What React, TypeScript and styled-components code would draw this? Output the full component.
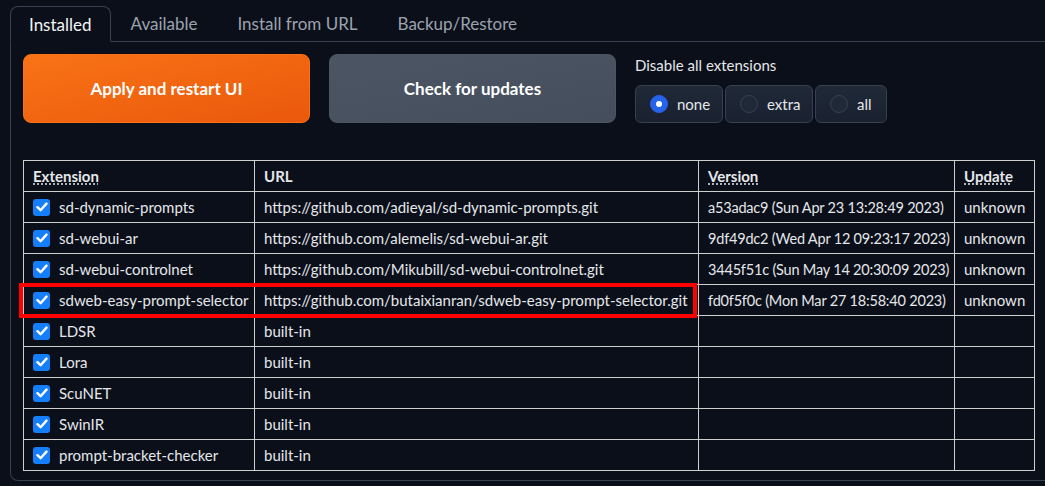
import React from 'react';
import styled, { createGlobalStyle } from 'styled-components';

const GlobalStyle = createGlobalStyle`
  html, body {
    margin: 0;
    padding: 0;
    background: #0b0f19;
  }
  body {
    font-family: Lato, "Noto Sans", sans-serif;
    color: #e5e7eb;
    overflow: hidden;
  }
`;

type Ext = {
  name: string;
  url: string;
  version: string;
  update: string;
};

const extensions: Ext[] = [
  { name: 'sd-dynamic-prompts', url: 'https://github.com/adieyal/sd-dynamic-prompts.git', version: 'a53adac9 (Sun Apr 23 13:28:49 2023)', update: 'unknown' },
  { name: 'sd-webui-ar', url: 'https://github.com/alemelis/sd-webui-ar.git', version: '9df49dc2 (Wed Apr 12 09:23:17 2023)', update: 'unknown' },
  { name: 'sd-webui-controlnet', url: 'https://github.com/Mikubill/sd-webui-controlnet.git', version: '3445f51c (Sun May 14 20:30:09 2023)', update: 'unknown' },
  { name: 'sdweb-easy-prompt-selector', url: 'https://github.com/butaixianran/sdweb-easy-prompt-selector.git', version: 'fd0f5f0c (Mon Mar 27 18:58:40 2023)', update: 'unknown' },
  { name: 'LDSR', url: 'built-in', version: '', update: '' },
  { name: 'Lora', url: 'built-in', version: '', update: '' },
  { name: 'ScuNET', url: 'built-in', version: '', update: '' },
  { name: 'SwinIR', url: 'built-in', version: '', update: '' },
  { name: 'prompt-bracket-checker', url: 'built-in', version: '', update: '' },
];

const tabs = ['Installed', 'Available', 'Install from URL', 'Backup/Restore'];
const modes = ['none', 'extra', 'all'];

export default function App() {
  return (
    <Page>
      <GlobalStyle />
      <TabBar>
        {tabs.map((t, i) => (
          <Tab key={t} active={i === 0}>{t}</Tab>
        ))}
        <TabFill />
      </TabBar>
      <Panel>
        <Toolbar>
          <BigButton variant="primary">Apply and restart UI</BigButton>
          <BigButton variant="secondary">Check for updates</BigButton>
          <RadioBlock>
            <RadioLabel>Disable all extensions</RadioLabel>
            <RadioGroup>
              {modes.map((m, i) => (
                <RadioItem key={m}>
                  <RadioDot checked={i === 0} />
                  {m}
                </RadioItem>
              ))}
            </RadioGroup>
          </RadioBlock>
        </Toolbar>

        <TableWrap>
          <Table>
            <colgroup>
              <col style={{ width: 231 }} />
              <col style={{ width: 444 }} />
              <col style={{ width: 256 }} />
              <col style={{ width: 80 }} />
            </colgroup>
            <thead>
              <tr>
                <Th><abbr>Extension</abbr></Th>
                <Th>URL</Th>
                <Th><abbr>Version</abbr></Th>
                <Th><abbr>Update</abbr></Th>
              </tr>
            </thead>
            <tbody>
              {extensions.map((e) => (
                <tr key={e.name}>
                  <Td>
                    <NameCell>
                      <Check>
                        <svg width="12" height="10" viewBox="0 0 12 10">
                          <path d="M1.5 5.2 L4.6 8.2 L10.5 1.6" fill="none" stroke="#fff" strokeWidth="2.4" strokeLinecap="round" strokeLinejoin="round" />
                        </svg>
                      </Check>
                      {e.name}
                    </NameCell>
                  </Td>
                  <Td>{e.url}</Td>
                  <Td tight>{e.version}</Td>
                  <Td>{e.update}</Td>
                </tr>
              ))}
            </tbody>
          </Table>
          <Highlight />
        </TableWrap>
      </Panel>
    </Page>
  );
}

const Page = styled.div`
  padding: 6px 0 0 10px;
  width: 1045px;
  height: 486px;
  box-sizing: border-box;
  overflow: hidden;
`;

const TabBar = styled.div`
  display: flex;
  align-items: flex-end;
  height: 36px;
`;

const Tab = styled.div<{ active?: boolean }>`
  height: 36px;
  box-sizing: border-box;
  padding: ${(p) => (p.active ? '0 18px' : '0 20px')};
  display: flex;
  align-items: center;
  font-size: 17px;
  color: ${(p) => (p.active ? '#f3f4f6' : '#9ca3af')};
  border: 1px solid ${(p) => (p.active ? '#374151' : 'transparent')};
  border-bottom: ${(p) => (p.active ? '1px solid #0b0f19' : '1px solid #374151')};
  border-radius: 8px 8px 0 0;
  ${(p) => (!p.active ? 'border-radius: 0; border-top: none; border-left: none; border-right: none;' : '')}
`;

const TabFill = styled.div`
  flex: 1;
  height: 36px;
  border-bottom: 1px solid #374151;
  margin-right: -40px;
`;

const Panel = styled.div`
  border: 1px solid #374151;
  border-top: none;
  border-radius: 0 0 8px 8px;
  margin-right: -40px;
  height: 439px;
  box-sizing: border-box;
  padding: 12px 0 0 12px;
`;

const Toolbar = styled.div`
  display: flex;
  gap: 19px;
  align-items: flex-start;
`;

const BigButton = styled.button<{ variant: 'primary' | 'secondary' }>`
  width: 287px;
  height: 69px;
  border-radius: 8px;
  font-family: inherit;
  font-size: 17px;
  font-weight: 700;
  color: #fff;
  cursor: pointer;
  border: 1px solid ${(p) => (p.variant === 'primary' ? '#f97316' : '#4b5563')};
  background: ${(p) =>
    p.variant === 'primary'
      ? 'linear-gradient(to bottom right, #f97316, #ea580c)'
      : 'linear-gradient(to bottom right, #4b5563, #454e5c)'};
`;

const RadioBlock = styled.div`
  display: flex;
  flex-direction: column;
  gap: 10px;
  padding-top: 2px;
`;

const RadioLabel = styled.div`
  font-size: 15px;
  color: #e5e7eb;
  line-height: 19px;
`;

const RadioGroup = styled.div`
  display: flex;
  gap: 2px;
`;

const RadioItem = styled.label`
  display: flex;
  align-items: center;
  gap: 9px;
  height: 38px;
  box-sizing: border-box;
  padding: 0 14px 0 14px;
  min-width: 71px;
  border: 1px solid #374151;
  border-radius: 6px;
  background: linear-gradient(to bottom, #1f2937, #1a2130);
  font-size: 15px;
  color: #e5e7eb;
  &:nth-child(-n + 2) {
    width: 88px;
  }
`;

const RadioDot = styled.span<{ checked?: boolean }>`
  width: 18px;
  height: 18px;
  border-radius: 50%;
  box-sizing: border-box;
  flex-shrink: 0;
  background: ${(p) => (p.checked ? '#2563eb' : '#1f2937')};
  border: 1px solid ${(p) => (p.checked ? '#2563eb' : '#374151')};
  display: flex;
  align-items: center;
  justify-content: center;
  &::after {
    content: '';
    display: ${(p) => (p.checked ? 'block' : 'none')};
    width: 6px;
    height: 6px;
    border-radius: 50%;
    background: #fff;
  }
`;

const TableWrap = styled.div`
  position: relative;
  margin-top: 37px;
  width: 1011px;
`;

const Table = styled.table`
  border-collapse: collapse;
  table-layout: fixed;
  width: 1011px;
  font-size: 15px;
  color: #e5e7eb;
`;

const Th = styled.th`
  height: 31px;
  box-sizing: border-box;
  border: 1px solid #cfcfcf;
  text-align: left;
  padding: 0 9px;
  font-weight: 700;
  abbr {
    text-decoration: underline dotted;
    text-underline-offset: 2px;
  }
`;

const Td = styled.td<{ tight?: boolean }>`
  height: 31px;
  box-sizing: border-box;
  border: 1px solid #cfcfcf;
  padding: 0 9px;
  white-space: nowrap;
  overflow: hidden;
  ${(p) => (p.tight ? 'font-size: 14.5px; letter-spacing: -0.2px;' : '')}
`;

const NameCell = styled.div`
  display: flex;
  align-items: center;
  gap: 9px;
`;

const Check = styled.span`
  width: 17px;
  height: 17px;
  border-radius: 3px;
  background: #157efb;
  display: flex;
  align-items: center;
  justify-content: center;
  flex-shrink: 0;
`;

const Highlight = styled.div`
  position: absolute;
  left: -4px;
  top: 123px;
  width: 678px;
  height: 35px;
  box-sizing: border-box;
  border: 4px solid #ff0000;
  pointer-events: none;
`;
